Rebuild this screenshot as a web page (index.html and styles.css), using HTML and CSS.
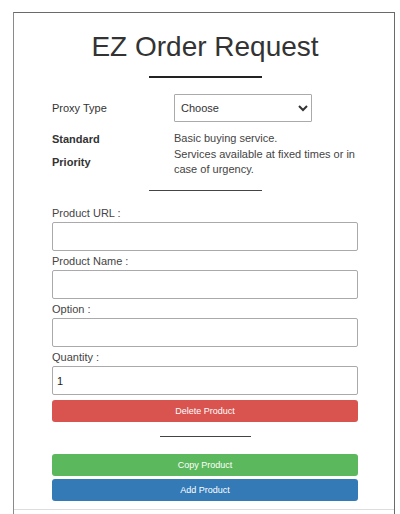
FILE: index.html
```html
<!DOCTYPE html>
<html lang="en">
<head>
    <title>EZ Order Request</title>
    <link rel="stylesheet" href="styles.css">
    <meta name="viewport" content="width=device-width, initial-scale=1.0" charset="utf-8">
</head>
<body>
    <div class="card">
        <h1>EZ Order Request</h1>
        <hr class="rule-thick">

        <!-- Proxy type section -->
        <div class="proxy-row">
            <label class="proxy-label" for="proxy-type">Proxy Type</label>
            <select id="proxy-type" class="proxy-select">
                <option>Choose</option>
                <option>Standard</option>
                <option>Priority</option>
            </select>
        </div>
        <div class="proxy-info">
            <div class="info-names">
                <b>Standard</b>
                <b>Priority</b>
            </div>
            <div class="info-text">
                <p>Basic buying service.</p>
                <p>Services available at fixed times or in case of urgency.</p>
            </div>
        </div>
        <hr class="rule-thin">

        <!-- Product fields -->
        <div class="product">
            <label>Product URL :</label>
            <input type="text">
            <label>Product Name :</label>
            <input type="text">
            <label>Option :</label>
            <input type="text">
            <label>Quantity :</label>
            <input type="text" value="1">
            <button class="btn btn-delete">Delete Product</button>
        </div>
        <hr class="rule-small">

        <div class="actions">
            <button class="btn btn-copy">Copy Product</button>
            <button class="btn btn-add">Add Product</button>
        </div>
        <div class="card-foot"></div>
    </div>
</body>
</html>
```

FILE: styles.css
```css
body {
    font-family: "Liberation Sans", Arial, sans-serif;
    margin: 0;
    padding: 0;
    background-color: #fff;
    color: #333;
}
.card {
    margin: 12px 5px 0 13px;
    border: 1px solid #6a6a6a;
    border-left-color: #8a8a8a;
    border-bottom: none;
    padding: 18px 36px 0 38px;
}
h1 {
    text-align: center;
    font-weight: normal;
    font-size: 28px;
    margin: 0;
    line-height: 32px;
    color: #333;
}
hr {
    border: none;
    margin: 0 auto;
}
.rule-thick {
    width: 113px;
    height: 2px;
    background-color: #222;
    margin-top: 13px;
}
.proxy-row {
    display: flex;
    align-items: center;
    margin-top: 16px;
}
.proxy-label {
    width: 122px;
    font-size: 11px;
    color: #333;
}
.proxy-select {
    width: 138px;
    height: 28px;
    font-family: inherit;
    font-size: 11px;
    color: #333;
    border: 1px solid #aaa;
    border-radius: 1px;
    background-color: #fff;
    padding: 0 2px;
}
.proxy-info {
    display: flex;
    margin-top: 9px;
    font-size: 11px;
}
.info-names {
    width: 122px;
    display: flex;
    flex-direction: column;
    gap: 8px;
    padding-top: 1px;
}
.info-names b {
    line-height: 15px;
}
.info-text {
    flex: 1;
    color: #444;
}
.info-text p {
    margin: 0;
    line-height: 15px;
}
.info-text p + p {
    margin-top: 1px;
}
.rule-thin {
    width: 113px;
    height: 1px;
    background-color: #444;
    margin-top: 13px;
}
.product {
    display: flex;
    flex-direction: column;
    margin-top: 15px;
}
.product label {
    font-size: 11px;
    color: #444;
    line-height: 14px;
    margin-bottom: 2px;
}
.product input {
    height: 29px;
    box-sizing: border-box;
    border: 1px solid #aaa;
    border-radius: 2px;
    font-family: inherit;
    font-size: 11px;
    color: #222;
    padding: 0 4px;
    margin-bottom: 3px;
}
.btn {
    display: block;
    width: 100%;
    height: 22px;
    border: none;
    border-radius: 3px;
    color: #fff;
    font-family: inherit;
    font-size: 9px;
    cursor: pointer;
}
.btn-delete {
    background-color: #d9534f;
    margin-top: 2px;
}
.rule-small {
    width: 91px;
    height: 1px;
    background-color: #444;
    margin-top: 14px;
}
.actions {
    display: flex;
    flex-direction: column;
    gap: 3px;
    margin-top: 17px;
}
.btn-copy {
    background-color: #5cb85c;
}
.btn-add {
    background-color: #337ab7;
}
.card-foot {
    margin: 8px -36px 0 -38px;
    border-top: 1px solid #ddd;
    height: 10px;
}
```
